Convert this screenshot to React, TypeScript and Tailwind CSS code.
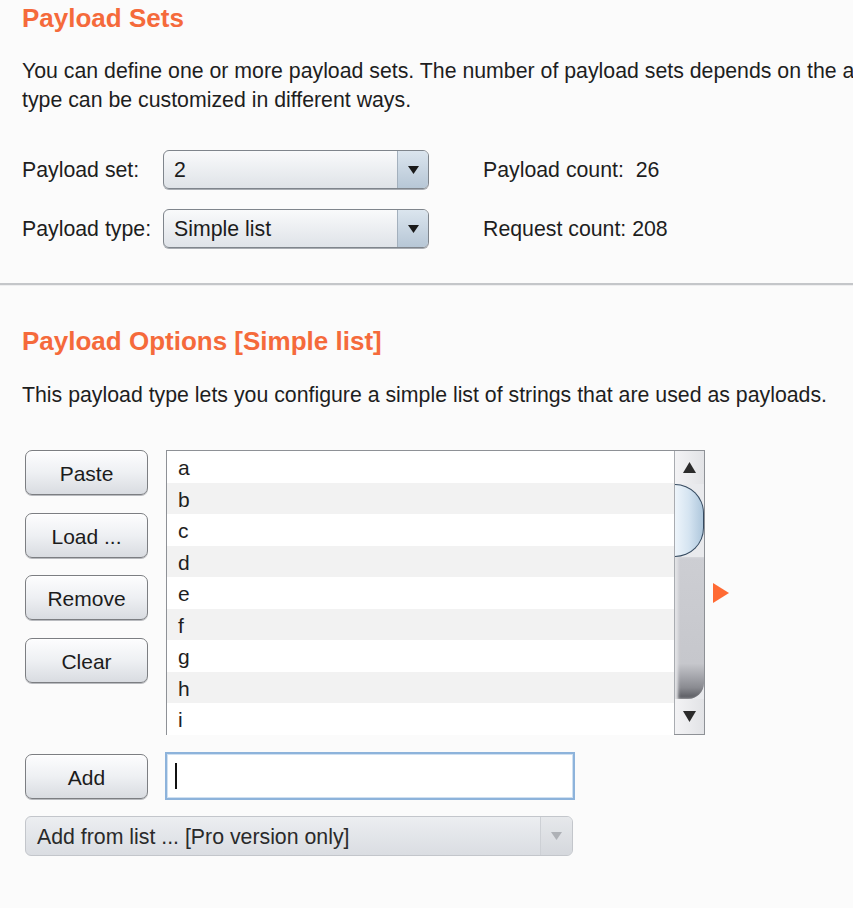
import React from "react";

const items = ["a", "b", "c", "d", "e", "f", "g", "h", "i"];

function Button({ label }: { label: string }) {
  return (
    <button className="h-[45px] w-[123px] rounded-[7px] border border-[#7c7e82] bg-gradient-to-b from-[#fdfdfe] via-[#eef0f3] to-[#d9dce1] pt-[3px] text-[21px] text-[#1c1c1c] shadow-[inset_0_1px_0_#ffffff,0_1px_0_#b9bbbf]">
      {label}
    </button>
  );
}

function Select({ value }: { value: string }) {
  return (
    <div className="flex h-[39px] w-[266px] overflow-hidden rounded-[6px] border border-[#7f858c] bg-gradient-to-b from-[#f9fafb] to-[#dfe3e8] shadow-[0_1px_0_#a9adb3]">
      <div className="flex flex-1 items-center pl-[10px] pt-[2px] text-[21.3px] text-[#1c1c1c]">{value}</div>
      <div className="flex w-[31px] items-center justify-center border-l border-[#a3b0bd] bg-gradient-to-b from-[#dbe5ee] to-[#b7c7d6]">
        <svg width="11" height="8" viewBox="0 0 11 8">
          <path d="M0 0H11L5.5 8Z" fill="#1a1a1a" />
        </svg>
      </div>
    </div>
  );
}

export default function App() {
  return (
    <div className="h-[908px] w-[853px] overflow-hidden bg-[#fbfbfb] font-['Liberation_Sans',Arial,sans-serif] text-[#1e1e1e]">
      {/* Payload Sets */}
      <section className="pt-[3px]">
        <h2 className="pl-[22px] text-[26px] font-bold leading-[30px] text-[#f56a3b]">Payload Sets</h2>
        <p className="mt-[24px] whitespace-nowrap pl-[22px] text-[21.3px] leading-[29px]">
          You can define one or more payload sets. The number of payload sets depends on the attack type defined in the Positions tab. Various payload types are available for each payload set, and each payload
          <br />
          type can be customized in different ways.
        </p>

        <div className="mt-[35px] flex flex-col gap-[20px] pl-[22px] text-[21.3px]">
          <div className="flex items-center">
            <span className="w-[141px] pt-[3px]">Payload set:</span>
            <Select value="2" />
            <span className="ml-[54px] whitespace-pre pt-[3px]">Payload count:  26</span>
          </div>
          <div className="flex items-center">
            <span className="w-[141px] pt-[3px]">Payload type:</span>
            <Select value="Simple list" />
            <span className="ml-[54px] whitespace-pre pt-[3px]">Request count: 208</span>
          </div>
        </div>
      </section>

      <div className="mt-[35px] h-[3px] border-t-2 border-[#c4c6c9] bg-[#eeeeef]" />

      {/* Payload Options */}
      <section>
        <h2 className="mt-[40px] pl-[22px] text-[26px] font-bold leading-[30px] text-[#f56a3b]">Payload Options [Simple list]</h2>
        <p className="mt-[25px] whitespace-nowrap pl-[22px] text-[21.3px] leading-[29px]">
          This payload type lets you configure a simple list of strings that are used as payloads.
        </p>

        <div className="mt-[40px] flex pl-[25px]">
          <div className="flex flex-col gap-[17.5px]">
            <Button label="Paste" />
            <Button label="Load ..." />
            <Button label="Remove" />
            <Button label="Clear" />
          </div>

          <div className="ml-[18px] flex h-[285px] w-[539px] border border-[#8e9196] bg-white">
            <ul className="flex-1">
              {items.map((it, i) => (
                <li
                  key={it}
                  className={`flex h-[31.5px] items-center pl-[11px] pt-[2px] text-[21px] ${i % 2 === 1 ? "bg-[#f2f2f2]" : "bg-white"}`}
                >
                  {it}
                </li>
              ))}
            </ul>
            {/* scrollbar */}
            <div className="flex w-[30px] flex-col border-l border-[#a9acb1] bg-[#e9eaed]">
              <div className="flex h-[33px] items-center justify-center bg-gradient-to-r from-[#f3f3f5] to-[#e2e3e6]">
                <svg width="13" height="11" viewBox="0 0 13 11">
                  <path d="M6.5 0L13 11H0Z" fill="#2b2b2b" />
                </svg>
              </div>
              <div className="h-[73px] rounded-r-full border border-l-0 border-[#34495f] bg-gradient-to-r from-[#eef5fb] via-[#d5e4f1] to-[#aec7dc]" />
              <div className="flex-1 rounded-br-[16px] bg-[linear-gradient(to_bottom,#cdced3_0%,#c6c7cc_75%,#8a8b91_92%,#55565c_100%)] shadow-[inset_3px_0_3px_#e2e3e6]" />
              <div className="flex h-[35px] items-center justify-center bg-gradient-to-r from-[#f3f3f5] to-[#e2e3e6]">
                <svg width="13" height="11" viewBox="0 0 13 11">
                  <path d="M0 0H13L6.5 11Z" fill="#2b2b2b" />
                </svg>
              </div>
            </div>
          </div>

          <div className="ml-[8px] flex items-center">
            <svg width="16" height="20" viewBox="0 0 16 20">
              <path d="M0 0L16 10L0 20Z" fill="#ff6a33" />
            </svg>
          </div>
        </div>

        <div className="mt-[17px] flex items-center pl-[25px]">
          <Button label="Add" />
          <div className="ml-[17px] flex h-[48px] w-[410px] items-center border-2 border-[#8db3db] bg-white pl-[8px] shadow-[inset_0_0_0_1px_#cfe0f1]">
            <span className="h-[26px] w-[2px] bg-[#111]" />
          </div>
        </div>

        <div className="ml-[25px] mt-[16px] flex h-[40px] w-[548px] overflow-hidden rounded-[6px] border border-[#c3c6cb] bg-gradient-to-b from-[#eceef1] to-[#dadde2]">
          <div className="flex flex-1 items-center pl-[11px] pt-[3px] text-[21.3px] text-[#2a2a2a]">Add from list ... [Pro version only]</div>
          <div className="flex w-[32px] items-center justify-center border-l border-[#cdd0d5] bg-gradient-to-b from-[#e6e8eb] to-[#d5d8dd]">
            <svg width="11" height="8" viewBox="0 0 11 8">
              <path d="M0 0H11L5.5 8Z" fill="#aeb1b6" />
            </svg>
          </div>
        </div>
      </section>
    </div>
  );
}
